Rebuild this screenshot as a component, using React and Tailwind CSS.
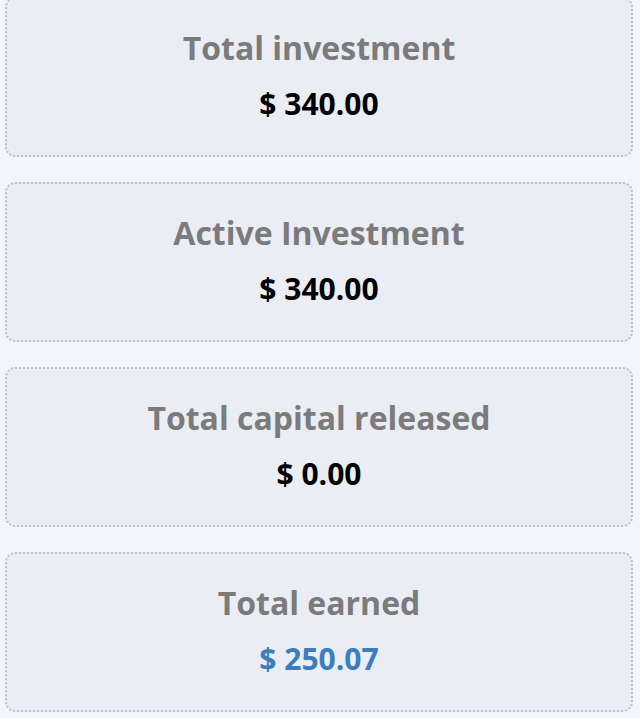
const stats = [
  { label: "Total investment", value: "$ 340.00" },
  { label: "Active Investment", value: "$ 340.00" },
  { label: "Total capital released", value: "$ 0.00" },
  { label: "Total earned", value: "$ 250.07", accent: true },
];

const StatCard = ({ label, value, accent }) => (
  <div className="h-[160px] rounded-[10px] border-2 border-dotted border-[#babfcc] bg-[#eaedf4] flex flex-col items-center justify-center gap-[16px] pb-[3px]">
    <p className="text-[32px] leading-[40px] font-bold text-[#7b7b7b]">{label}</p>
    <p className={`text-[30px] leading-[40px] font-bold ${accent ? "text-[#3b7dbd]" : "text-black"}`}>{value}</p>
  </div>
);

export default function App() {
  return (
    <div
      className="min-h-[718px] bg-[#f2f5f9] overflow-hidden"
      style={{ fontFamily: '"Open Sans", "Noto Sans", sans-serif' }}
    >
      <div className="-mt-[3px] px-[5px] pr-[7px] flex flex-col gap-[25px]">
        {stats.map((s, i) => (
          <StatCard key={i} {...s} />
        ))}
      </div>
    </div>
  );
}
